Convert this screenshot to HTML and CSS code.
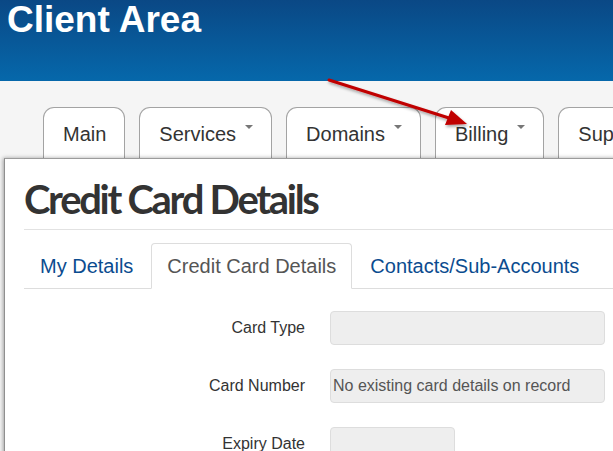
FILE: index.html
```html
<!DOCTYPE html>
<html lang="en">
<head>
  <meta charset="UTF-8">
  <meta name="viewport" content="width=device-width, initial-scale=1.0">
  <title>Client Area</title>
  <link rel="stylesheet" href="styles.css">
</head>
<body>

  <header class="site-header">
    <h1>Client Area</h1>
  </header>

  <div class="main-area">
    <ul class="top-nav">
      <li class="top-tab">Main</li>
      <li class="top-tab">Services<span class="caret"></span></li>
      <li class="top-tab">Domains<span class="caret"></span></li>
      <li class="top-tab">Billing<span class="caret"></span></li>
      <li class="top-tab">Support<span class="caret"></span></li>
    </ul>

    <div class="panel">
      <div class="page-header">
        <h2>Credit Card Details</h2>
      </div>

      <ul class="nav-tabs">
        <li><a href="#">My Details</a></li>
        <li class="active"><a href="#">Credit Card Details</a></li>
        <li><a href="#">Contacts/Sub-Accounts</a></li>
      </ul>

      <div class="form">
        <div class="form-row">
          <label>Card Type</label>
          <div class="field"></div>
        </div>
        <div class="form-row">
          <label>Card Number</label>
          <div class="field">No existing card details on record</div>
        </div>
        <div class="form-row">
          <label>Expiry Date</label>
          <div class="field small"></div>
        </div>
      </div>
    </div>
  </div>

  <!-- annotation arrow pointing at the Billing tab -->
  <svg class="arrow" width="613" height="451" viewBox="0 0 613 451">
    <defs>
      <filter id="shadow" x="-20%" y="-20%" width="140%" height="160%">
        <feDropShadow dx="1" dy="2" stdDeviation="1.5" flood-color="#000" flood-opacity="0.35"/>
      </filter>
    </defs>
    <g filter="url(#shadow)">
      <line x1="329" y1="80" x2="449" y2="118" stroke="#c00000" stroke-width="3" stroke-linecap="round"/>
      <polygon points="467,124 445,125 451,110" fill="#c00000"/>
    </g>
  </svg>

</body>
</html>
```

FILE: styles.css
```css
html {
  overflow: hidden;
}

body {
  margin: 0;
  font-family: 'Liberation Sans', Arial, sans-serif;
  background: #f5f5f5;
  color: #333;
  height: 451px;
  overflow: hidden;
  position: relative;
}

.site-header {
  height: 81px;
  background: linear-gradient(to bottom, #0a4885, #0668ab);
  padding: 2px 0 0 7px;
  box-sizing: border-box;
}

.site-header h1 {
  margin: 0;
  color: #fff;
  font-size: 37px;
  line-height: 36px;
  font-weight: bold;
}

.main-area {
  background: #f5f5f5;
}

.top-nav {
  list-style: none;
  margin: 26px 0 0 43px;
  padding: 0;
  display: flex;
  gap: 14px;
  white-space: nowrap;
}

.top-tab {
  height: 52px;
  box-sizing: border-box;
  padding: 15px 18px 0 19px;
  border: 1px solid #a3a3a3;
  border-bottom: none;
  border-radius: 11px 11px 0 0;
  background: #fff;
  font-size: 20px;
  line-height: 22px;
  color: #333;
}

.caret {
  display: inline-block;
  margin-left: 9px;
  width: 0;
  height: 0;
  border-top: 4px solid #777;
  border-left: 4px solid transparent;
  border-right: 4px solid transparent;
  vertical-align: 12px;
}

.panel {
  position: relative;
  margin: -1px -20px 0 4px;
  padding: 18px 0 0 19px;
  background: #fff;
  border-top: 1px solid #9c9c9c;
  border-left: 1px solid #8f8f8f;
  box-shadow: -1px 0 4px rgba(0, 0, 0, 0.35);
  height: 320px;
}

.page-header {
  padding-bottom: 8px;
  border-bottom: 1px solid #e2e2e2;
}

.page-header h2 {
  margin: 0;
  font-family: Lato, 'Open Sans', sans-serif;
  font-weight: 700;
  font-size: 40px;
  line-height: 44px;
  letter-spacing: -2.3px;
  color: #333;
}

.nav-tabs {
  list-style: none;
  margin: 13px 0 0;
  padding: 0;
  display: flex;
  border-bottom: 1px solid #ddd;
  white-space: nowrap;
}

.nav-tabs li {
  margin-right: 2px;
  margin-bottom: -1px;
}

.nav-tabs a {
  display: block;
  padding: 11px 15px;
  font-size: 20px;
  line-height: 22px;
  color: #0b4c8f;
  text-decoration: none;
  border: 1px solid transparent;
  border-radius: 4px 4px 0 0;
}

.nav-tabs .active a {
  color: #555;
  background: #fff;
  border-color: #ddd #ddd transparent;
}

.form {
  padding-top: 22px;
}

.form-row {
  display: flex;
  gap: 25px;
  margin-bottom: 24px;
}

.form-row label {
  width: 281px;
  text-align: right;
  font-size: 16px;
  line-height: 34px;
  color: #333;
}

.field {
  width: 275px;
  height: 34px;
  box-sizing: border-box;
  padding: 0 2px;
  background: #eee;
  border: 1px solid #ddd;
  border-radius: 4px;
  font-size: 16px;
  line-height: 32px;
  color: #555;
  white-space: nowrap;
}

.field.small {
  width: 125px;
}

.arrow {
  position: absolute;
  left: 0;
  top: 0;
  pointer-events: none;
}
```
